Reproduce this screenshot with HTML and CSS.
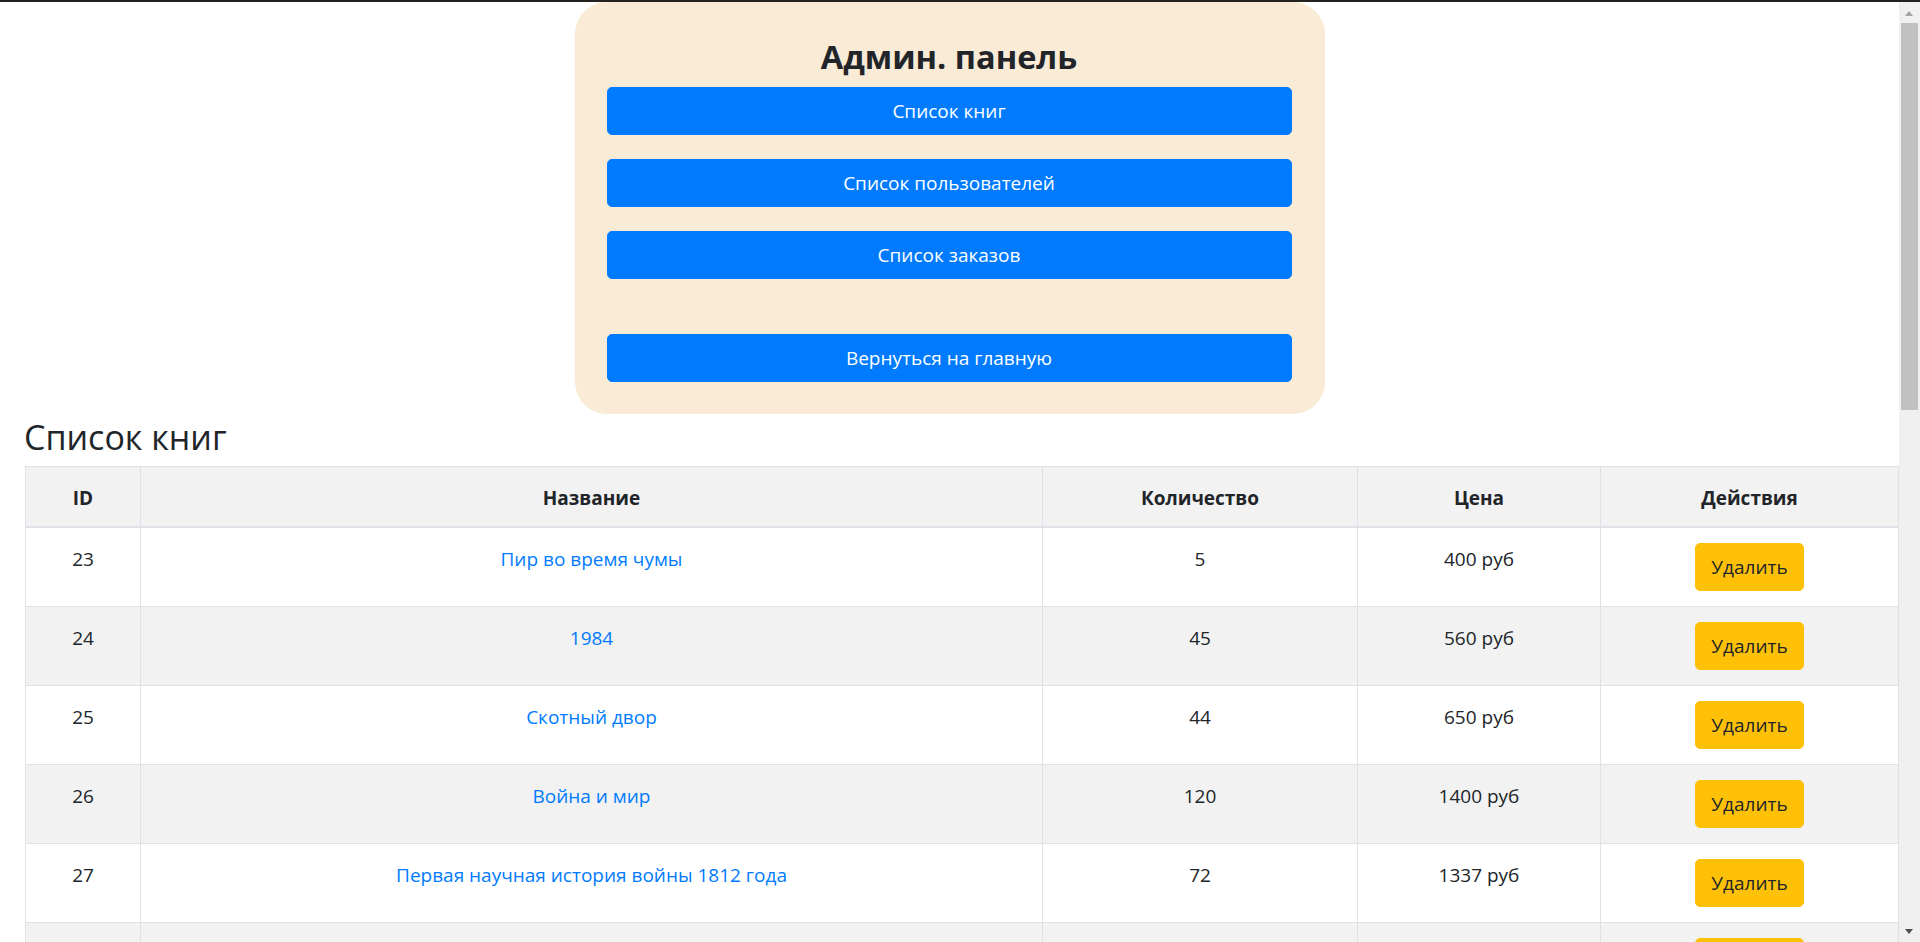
FILE: index.html
```html
<!DOCTYPE html>
<html lang="ru">
<head>
<meta charset="utf-8">
<title>Админ. панель</title>
<link rel="stylesheet" href="styles.css">
</head>
<body>
<div class="topbar"></div>
<div class="panel">
  <h2 class="panel-title">Админ. панель</h2>
  <a class="btn-block" href="#">Список книг</a>
  <a class="btn-block" href="#">Список пользователей</a>
  <a class="btn-block" href="#">Список заказов</a>
  <div class="spacer"></div>
  <a class="btn-block last" href="#">Вернуться на главную</a>
</div>
<h3 class="section-title">Список книг</h3>
<div class="table-wrap">
<table class="books">
  <thead>
    <tr>
      <th class="c-id">ID</th>
      <th class="c-name">Название</th>
      <th class="c-qty">Количество</th>
      <th class="c-price">Цена</th>
      <th class="c-act">Действия</th>
    </tr>
  </thead>
  <tbody>
    <tr><td>23</td><td><a class="link" href="#">Пир во время чумы</a></td><td>5</td><td>400 руб</td><td class="act"><button class="btn-warning">Удалить</button></td></tr>
    <tr><td>24</td><td><a class="link" href="#">1984</a></td><td>45</td><td>560 руб</td><td class="act"><button class="btn-warning">Удалить</button></td></tr>
    <tr><td>25</td><td><a class="link" href="#">Скотный двор</a></td><td>44</td><td>650 руб</td><td class="act"><button class="btn-warning">Удалить</button></td></tr>
    <tr><td>26</td><td><a class="link" href="#">Война и мир</a></td><td>120</td><td>1400 руб</td><td class="act"><button class="btn-warning">Удалить</button></td></tr>
    <tr><td>27</td><td><a class="link" href="#">Первая научная история войны 1812 года</a></td><td>72</td><td>1337 руб</td><td class="act"><button class="btn-warning">Удалить</button></td></tr>
    <tr><td>28</td><td><a class="link" href="#">Мастер и Маргарита</a></td><td>30</td><td>720 руб</td><td class="act"><button class="btn-warning">Удалить</button></td></tr>
  </tbody>
</table>
</div>
<div class="scrollbar">
  <span class="arrow-up"></span>
  <span class="thumb"></span>
  <span class="arrow-down"></span>
</div>
</body>
</html>
```

FILE: styles.css
```css
html, body {
  margin: 0;
  padding: 0;
}
body {
  padding-right: 21px;
  font-family: "Open Sans", "Noto Sans", sans-serif;
  font-size: 19px;
  line-height: 1.5;
  color: #212529;
  background: #ffffff;
}
.topbar {
  position: fixed;
  top: 0;
  left: 0;
  right: 0;
  height: 2px;
  background: #25211f;
  z-index: 5;
}
.panel {
  box-sizing: border-box;
  width: 750px;
  margin: 2px auto 0;
  padding: 32px 33px 32px 32px;
  background: #faebd7;
  border-radius: 32px;
  text-align: center;
}
.panel-title {
  margin: 2px 0 9px;
  font-size: 32.5px;
  font-weight: 700;
  line-height: 42px;
}
.btn-block {
  display: block;
  box-sizing: border-box;
  width: 100%;
  padding: 8px 15px;
  margin-bottom: 24px;
  font-size: 19px;
  line-height: 30px;
  color: #ffffff;
  background: #007bff;
  border: 1px solid #007bff;
  border-radius: 5px;
  text-decoration: none;
}
.btn-block.last {
  margin-bottom: 0;
}
.spacer {
  height: 31px;
}
.section-title {
  margin: 0 0 8px;
  padding: 2px 0 0 24px;
  font-size: 34px;
  font-weight: 500;
  line-height: 42px;
}
.table-wrap {
  padding-left: 25px;
}
.books {
  width: 100%;
  table-layout: fixed;
  border-collapse: collapse;
}
.books th,
.books td {
  padding: 17px 15px 13px;
  border: 1px solid #dee2e6;
  text-align: center;
  vertical-align: top;
}
.books td.act {
  padding: 15px;
}
.books thead th {
  font-weight: 700;
  background: #f2f2f2;
  border-bottom: 2px solid #dee2e6;
}
.books tbody tr:nth-child(even) td {
  background: #f2f2f2;
}
.c-id { width: 84px; }
.c-qty { width: 284px; }
.c-price { width: 212px; }
.c-act { width: 267px; }
.link {
  color: #007bff;
  text-decoration: none;
}
.btn-warning {
  display: inline-block;
  padding: 8px 15px;
  font-family: inherit;
  font-size: 19px;
  line-height: 30px;
  color: #212529;
  background: #ffc107;
  border: 1px solid #ffc107;
  border-radius: 5px;
}
.scrollbar {
  position: fixed;
  top: 2px;
  right: 0;
  bottom: 0;
  width: 21px;
  background: #f0f0f0;
  z-index: 4;
}
.arrow-up {
  position: absolute;
  top: 9px;
  left: 6px;
  width: 0;
  height: 0;
  border-left: 4.5px solid transparent;
  border-right: 4.5px solid transparent;
  border-bottom: 5px solid #a3a3a3;
}
.thumb {
  position: absolute;
  top: 21px;
  left: 2px;
  width: 17px;
  height: 387px;
  background: #c1c1c1;
}
.arrow-down {
  position: absolute;
  bottom: 8px;
  left: 6px;
  width: 0;
  height: 0;
  border-left: 4.5px solid transparent;
  border-right: 4.5px solid transparent;
  border-top: 5px solid #505050;
}
```
